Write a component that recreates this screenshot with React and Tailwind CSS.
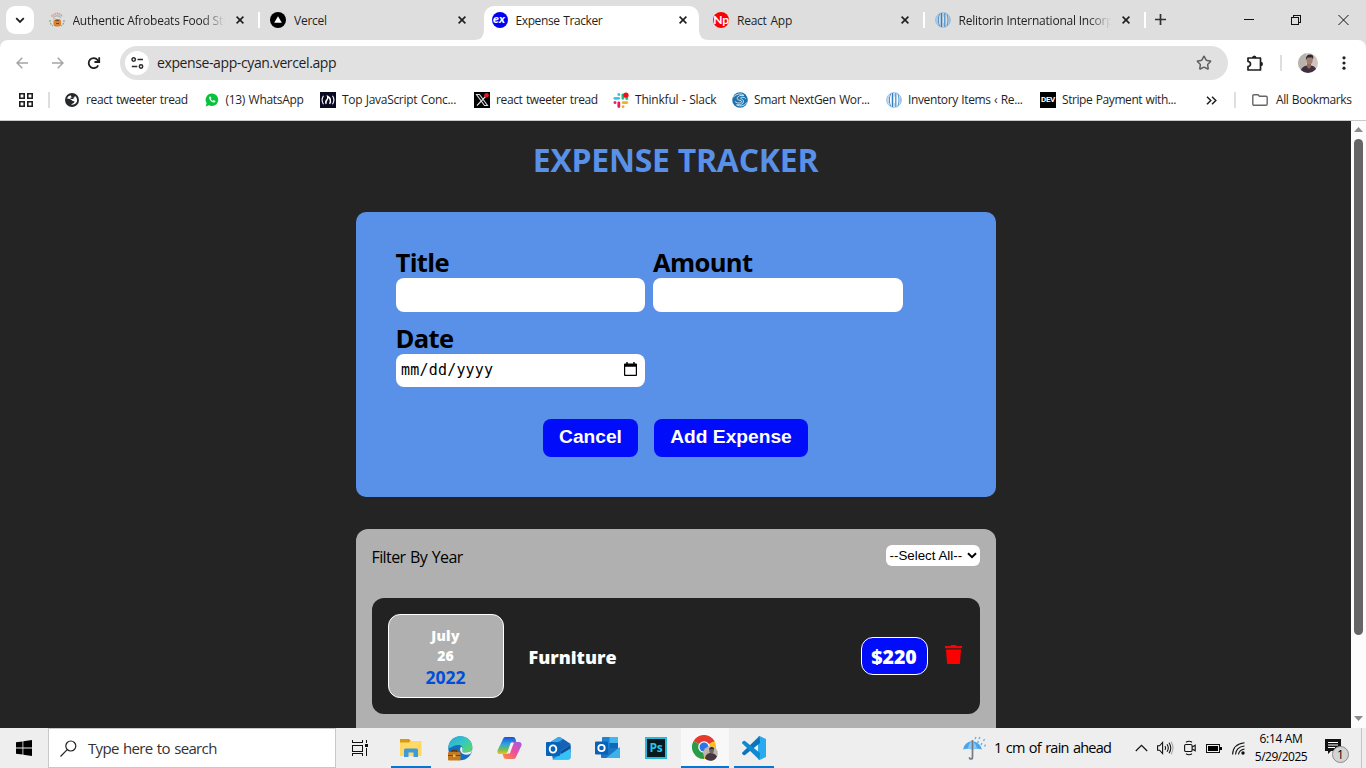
import React from "react";
import { Star } from "lucide-react";

function RelitorinIcon() {
  return (
    <svg width="16" height="16" viewBox="0 0 16 16" fill="none" stroke="#4a90cf" strokeWidth="1">
      <circle cx="8" cy="8" r="7.400" stroke="#8fb9de" strokeWidth="0.9" />
      <path d="M6.500 1v14" strokeWidth="1.500" stroke="#2f7fc6" />
      <path d="M9.800 1v14" strokeWidth="1.300" />
      <path d="M4.500 2C3 5.500 3 10.500 4.500 14M12 2.200c1.300 3.400 1.300 8.200 0 11.600" />
      <path d="M2.300 4.500q-.8 3.500 0 7M14 4.500q.8 3.500 0 7" stroke="#8fb9de" />
      <path d="M8.200 2v2.500M8.200 11v3" stroke="#9cc3e6" />
    </svg>
  );
}

function FoodIcon() {
  return (
    <svg width="16" height="16" viewBox="0 0 16 16" fill="none">
      <path d="M2.500 4.500Q8-1.500 13.500 4.500" stroke="#d99a9a" strokeWidth="1.800" strokeDasharray="1.500 .6" />
      <path d="M4 5.500Q8 2 12 5.500" stroke="#a9bccb" strokeWidth="1.500" />
      <path d="M1 8q-.3 4 3 6M15 8q.3 4-3 6" stroke="#79b07f" strokeWidth="1.200" strokeDasharray="2 1" />
      <rect x="4.500" y="7" width="7.500" height="7.500" rx="2.500" fill="#d98236" />
      <path d="M6 8.500h4M7 11.500h3" stroke="#7b451f" />
      <circle cx="5.500" cy="7" r="1.500" fill="#f0bd7c" />
    </svg>
  );
}

function VercelIcon() {
  return (
    <svg width="16" height="16" viewBox="0 0 16 16">
      <circle cx="8" cy="8" r="8" fill="#000" />
      <path d="M8 4.200 11.800 10.800H4.200Z" fill="#fff" />
    </svg>
  );
}

function CloseIcon() {
  return (
    <svg width="8" height="8" viewBox="0 0 8 8" stroke="#1f1f1f" strokeWidth="1.600" className="shrink-0">
      <path d="m.6.6 6.800 6.800M7.400.6.6 7.400" />
    </svg>
  );
}

function Tab({ icon, title, active, divider, fade, track }) {
  return (
    <div className="relative flex h-[34px] w-[221.500px] shrink-0 items-center">
      <div className={"ml-1 flex h-full w-[215px] items-center rounded-t-[10px] pb-1.5 pl-2 " + (active ? "bg-white" : "")}>
        <span className="flex h-4 w-4 shrink-0">{icon}</span>
        <span className={"mt-px ml-2 h-[18px] w-[152px] overflow-hidden whitespace-nowrap text-[12px] leading-[18px] text-[#1f1f1f] " + track + (fade ? " [mask-image:linear-gradient(to_right,black_85%,transparent)]" : "")}>
          {title}
        </span>
        <span className="ml-[11.500px] flex"><CloseIcon /></span>
      </div>
      {active && (
        <>
          <svg className="absolute -left-1.5 bottom-0" width="10" height="10" viewBox="0 0 10 10"><path d="M10 0v10H0Q10 10 10 0Z" fill="#fff" /></svg>
          <svg className="absolute -right-2 bottom-0" width="10" height="10" viewBox="0 0 10 10"><path d="M0 0v10h10Q0 10 0 0Z" fill="#fff" /></svg>
        </>
      )}
      {divider && <span className="absolute top-[6px] -right-0.5 h-4 w-0.5 bg-white" />}
    </div>
  );
}

function TabStrip() {
  return (
    <div className="flex h-10 items-end bg-[#dedede]">
      <button className="mb-1.5 ml-1.5 flex h-7 w-7 items-center justify-center rounded-[9px] bg-white">
        <svg width="10" height="7" viewBox="0 0 10 7" fill="none" stroke="#1f1f1f" strokeWidth="1.800"><path d="m1.200 1.200 3.800 3.800 3.800-3.800" /></svg>
      </button>
      <div className="ml-[2.500px] flex">
        <Tab icon={<FoodIcon />} title="Authentic Afrobeats Food Sto" fade divider track="tracking-[-0.22px]" />
        <Tab icon={<VercelIcon />} title="Vercel" track="tracking-[-0.25px]" />
        <Tab
          active
          title="Expense Tracker"
          track="tracking-[-0.4px] [word-spacing:1px]"
          icon={<span className="flex h-4 w-4 items-center justify-center rounded-full bg-[#0000f5] pr-px pb-0.5 font-['Lato'] text-[12px] leading-none font-black text-white italic">ex</span>}
        />
        <Tab
          divider
          title="React App"
          track="tracking-[-0.25px] [word-spacing:1px]"
          icon={<span className="flex h-4 w-4 items-center justify-center rounded-full bg-[#fa0000] pb-px font-['Lato'] text-[12px] leading-none font-bold tracking-[-0.3px] text-white">Np</span>}
        />
        <Tab icon={<RelitorinIcon />} title="Relitorin International Incorp" fade divider track="tracking-[-0.22px]" />
      </div>
      <svg className="mb-[15px] ml-[11px]" width="11" height="11" viewBox="0 0 11 11" stroke="#303030" strokeWidth="1.700"><path d="M5.500 0v11M0 5.500h11" /></svg>
      <div className="mr-[17px] mb-[14px] ml-auto flex items-center gap-9">
        <svg width="11" height="12" viewBox="0 0 11 12" stroke="#111" shapeRendering="crispEdges"><path d="M0 5.500h10" /></svg>
        <svg width="11" height="12" viewBox="0 0 11 12" fill="none" stroke="#111" shapeRendering="crispEdges"><path d="M.5 3.500h7v7h-7zM2.500 3V1.500h7v7H8" /></svg>
        <svg width="11" height="12" viewBox="0 0 11 12" stroke="#111"><path d="m.5 1 10 10M10.500 1l-10 10" /></svg>
      </div>
    </div>
  );
}

function Avatar() {
  return (
    <svg width="20" height="20" viewBox="0 0 20 20">
      <clipPath id="av"><circle cx="10" cy="10" r="10" /></clipPath>
      <g clipPath="url(#av)">
        <rect width="20" height="20" fill="#cfc5bd" />
        <rect width="8" height="20" fill="#b9b3ac" />
        <path d="M2 20q1-7 7-7.500h4q6 1 6 7.500Z" fill="#40303f" />
        <path d="M9 10h4v4l-2 2-2-2Z" fill="#8d6a5c" />
        <ellipse cx="11.500" cy="7" rx="3.200" ry="4.200" fill="#a07f70" />
        <path d="M8 7Q7.500 1.500 12 1.500T15 6.500L14 4.500H9.500Z" fill="#2f2832" />
      </g>
    </svg>
  );
}

function Toolbar() {
  return (
    <div className="bg-[#dedede]">
      <div className="flex h-[46px] items-center rounded-t-lg bg-white pl-4">
        <svg width="12" height="12" viewBox="0 0 12 12" fill="none" stroke="#a5a5a5" strokeWidth="1.500"><path d="M12 6H1M6.300.7 1 6l5.300 5.300" /></svg>
        <svg className="ml-6" width="12" height="12" viewBox="0 0 12 12" fill="none" stroke="#a5a5a5" strokeWidth="1.500"><path d="M0 6h11M5.700.7 11 6l-5.300 5.300" /></svg>
        <svg className="-mr-px ml-[23px]" width="14" height="13" viewBox="0 0 14 13" fill="none"><path d="M11.200 8.300A5 5 0 1 1 10.600 3L11.700 4.300" stroke="#1f1f1f" strokeWidth="1.800" /><path d="M12.200 .3V5H7.500" stroke="#1f1f1f" strokeWidth="1.800" /></svg>
        <div className="ml-5 flex h-[34px] w-[1108px] items-center rounded-full bg-[#e1e1e1] pl-[5px]">
          <span className="flex h-6 w-6 items-center justify-center rounded-full bg-white">
            <svg width="13" height="12" viewBox="0 0 13 12" fill="none" stroke="#2b2b2b" strokeWidth="1.500"><circle cx="2.700" cy="2.500" r="1.700" /><path d="M6.500 2.500H12M.8 9.500h5.500" /><circle cx="10" cy="9.500" r="1.700" /></svg>
          </span>
          <span className="mb-px ml-2 text-[14px] tracking-[-0.39px] text-[#1f1f1f]">expense-app-cyan.vercel.app</span>
          <Star className="mr-4 ml-auto h-4 w-4 text-[#5f5f5f]" strokeWidth={2.2} strokeLinejoin="miter" />
        </div>
        <svg className="ml-[18px]" width="18" height="18" viewBox="0 0 18 18" fill="none"><path d="M2 4h12.500v12H2v-3.500q2.500-.3 2.500-2.500T2 7.500Z" stroke="#1f1f1f" strokeWidth="1.700" strokeLinejoin="round" /><path d="M6 4q0-2.500 2.300-2.500T10.500 4ZM14.500 7.800q2.500 0 2.500 2.200t-2.500 2.200Z" fill="#1f1f1f" /></svg>
        <span className="ml-4 h-4 w-0.5 bg-[#dedede]" />
        <span className="ml-4"><Avatar /></span>
        <svg className="ml-6" width="4" height="14" viewBox="0 0 4 14" fill="#1f1f1f"><circle cx="2" cy="1.800" r="1.600" /><circle cx="2" cy="7" r="1.600" /><circle cx="2" cy="12.200" r="1.600" /></svg>
      </div>
    </div>
  );
}

function Bookmark({ icon, label, width, track = "tracking-[-0.37px]" }) {
  return (
    <div className={"flex shrink-0 items-center [word-spacing:0.7px] " + width}>
      <span className="flex h-4 w-4 shrink-0 items-center justify-center">{icon}</span>
      <span className={"ml-1.5 whitespace-nowrap " + track}>{label}</span>
    </div>
  );
}

function SlackIcon() {
  return (
    <svg width="17" height="17" viewBox="0 0 17 17" strokeWidth="3" strokeLinecap="round">
      <path d="M2 6.200h4" stroke="#36c5f0" /><path d="M6.200 2v.3" stroke="#36c5f0" />
      <path d="M10.500 2.500v3.700M14.500 6.500h.3" stroke="#2eb67d" />
      <path d="M6.200 11v4M2 10.700h.3" stroke="#e01e5a" />
      <path d="M10.700 10.700h4M10.700 15v.2" stroke="#ecb22e" />
      <circle cx="13.800" cy="2.800" r="2.800" fill="#f00f1e" />
    </svg>
  );
}

function BookmarksBar() {
  return (
    <div className="flex h-[35px] items-start border-b border-[#c9c9c9] bg-white pt-[6px] text-[12px] leading-4 text-[#1f1f1f]">
      <svg className="ml-[19px]" width="14" height="16" viewBox="0 0 14 16" fill="none" stroke="#1f1f1f" strokeWidth="1.600"><path d="M.8 1.800h4.400v4.400H.8zM8.800 1.800h4.400v4.400H8.800zM.8 9.800h4.400v4.400H.8zM8.800 9.800h4.400v4.400H8.800z" /></svg>
      <span className="ml-[15px] h-4 w-0.5 bg-[#dedede]" />
      <div className="ml-[14px] flex">
        <Bookmark width="w-[139.500px]" label="react tweeter tread" icon={<svg width="14" height="14" viewBox="0 0 14 14"><circle cx="7" cy="7" r="7" fill="#27282c" /><path d="M5.500 2.200Q2.500 3 2 5.500q3.500.2 4.500 1.500t3 1.200l-.5 1.500-3 1.800q4 .8 5.800-2.500Q12.800 5 10 3L9 4.700H7Z" fill="#fff" /><path d="M5.500 4.500h3v1.500h-3z" fill="#27282c" /></svg>} />
        <Bookmark width="w-[116.500px]" label="(13) WhatsApp" track="tracking-[-0.3px]" icon={<svg width="16" height="16" viewBox="0 0 16 16"><path d="M8 1.500a6.200 6.200 0 0 1 0 12.500q-1.600 0-3-.8L1.700 14.500 2.600 11A6.200 6.200 0 0 1 8 1.500Z" fill="#08c23c" /><path d="M5.700 4.600q-1.500 1.300.5 3.700 2.500 3 4.500 2 .9-.6.7-1.400L9.700 8l-.9.9Q7.300 8 6.700 6.700l.7-.7-.8-1.500Z" fill="#fff" /></svg>} />
        <Bookmark width="w-[154px]" label="Top JavaScript Conc..." track="tracking-[-0.3px]" icon={<span className="flex h-4 w-4 items-center justify-center bg-[#0a0a23]"><svg width="14" height="10" viewBox="0 0 14 10" fill="none" stroke="#fff" strokeWidth="1.100"><path d="M2.500 .8Q-.3 5 2.500 9.200M11.500 .8q2.800 4.200 0 8.400" /><path d="M5.300 8.800Q4 7 6 4.800 7.200 3.500 6.700 1.500 9.500 3 9.300 5.500 10 7 8.500 8.800" strokeWidth="1.500" /></svg></span>} />
        <Bookmark width="w-[139px]" label="react tweeter tread" icon={<svg width="16" height="16" viewBox="0 0 16 16"><path d="M0 0h16v16H0z" /><path d="M2.500 2.500h3l8 11h-3ZM13 3 3 13.500" fill="none" stroke="#ddd" strokeWidth="1.100" /><circle cx="12.500" cy="3.200" r="2.300" fill="#f5101f" /></svg>} />
        <Bookmark width="w-[119px]" label="Thinkful - Slack" track="tracking-[-0.22px]" icon={<SlackIcon />} />
        <Bookmark width="w-[154px]" label="Smart NextGen Wor..." icon={<svg width="16" height="16" viewBox="0 0 16 16" fill="none"><circle cx="8" cy="8" r="7.800" fill="#1d72ae" /><path d="M1 5.200Q7-.5 12 3.500 7 2.500 5.500 5.200T9 8.500q2 1.500-1 2.500-3 .5-5-1.500M15 10.500q-5 5.500-10.500 2.300 5 .7 6.600-1.800 2-2.800-1.800-4.200-2-1 .5-1.600 3-.3 4 1.700" stroke="#d8e9f5" strokeWidth=".9" /></svg>} />
        <Bookmark width="w-[154px]" label="Inventory Items ‹ Re..." icon={<RelitorinIcon />} />
        <Bookmark width="w-[137px]" label="Stripe Payment with..." track="tracking-[-0.42px]" icon={<span className="flex h-4 w-4 items-center justify-center bg-black font-['Roboto'] text-[8px] leading-none font-bold tracking-[-0.3px] text-white">DEV</span>} />
      </div>
      <svg className="mt-[4px] ml-[29px]" width="11" height="9" viewBox="0 0 11 9" fill="none" stroke="#1f1f1f" strokeWidth="1.500"><path d="m1 .7 3.800 3.800L1 8.300M6 .7l3.800 3.800L6 8.300" /></svg>
      <span className="ml-[17px] h-4 w-0.5 bg-[#dedede]" />
      <svg className="mt-[2px] ml-[16px]" width="16" height="12" viewBox="0 0 16 12" fill="none" stroke="#666" strokeWidth="1.400"><path d="M.8 2q0-1.200 1.200-1.200h4L7.500 2.300H14q1.200 0 1.200 1.200V10q0 1.200-1.200 1.200H2Q.8 11.200.8 10Z" /></svg>
      <span className="ml-2 tracking-[-0.4px] whitespace-nowrap [word-spacing:0.7px]">All Bookmarks</span>
    </div>
  );
}

function Field({ label, children, height = "h-[34px]" }) {
  return (
    <div className="flex w-[249.500px] flex-col">
      <span className="h-[32px] text-[25.600px] leading-[34px] font-bold tracking-[-0.65px] text-black">{label}</span>
      <div className={"flex items-center rounded-lg bg-white px-[5.500px] " + height}>{children}</div>
    </div>
  );
}

function ExpenseForm() {
  return (
    <section className="h-[285px] w-[640px] shrink-0 rounded-[10px] bg-[#5990e8] px-10 pt-[34px]">
      <div className="flex flex-wrap gap-x-2 gap-y-[10px]">
        <Field label="Title" />
        <Field label="Amount" />
        <Field label="Date" height="h-[33px]">
          <span className="font-['DejaVu_Sans_Mono',monospace] text-[15px] tracking-[0.2px] text-black">mm/dd/yyyy</span>
          <svg className="mr-[3px] mb-[3px] ml-auto" width="13" height="14" viewBox="0 0 14 15"><path d="M2.500 0H4v1.500h6V0h1.500v1.500H13q1 0 1 1V14q0 1-1 1H1q-1 0-1-1V2.500q0-1 1-1h1.500ZM1.300 5v8.600h11.400V5Z" /></svg>
        </Field>
      </div>
      <div className="mt-8 flex justify-center gap-4 font-['Liberation_Sans',Arial,sans-serif] text-[19.200px] font-bold text-white">
        <button className="h-[38px] w-[95px] rounded-lg bg-[#000cfa] pb-px">Cancel</button>
        <button className="h-[38px] w-[154px] rounded-lg bg-[#000cfa] pb-px">Add Expense</button>
      </div>
    </section>
  );
}

function ExpenseList() {
  return (
    <section className="mt-8 h-[240px] w-[640px] shrink-0 rounded-t-[12px] bg-[#b0b0b0] px-4 pt-4">
      <div className="flex items-start justify-between">
        <span className="text-[16px] leading-6 tracking-[-0.6px] text-black [word-spacing:1px]">Filter By Year</span>
        <div className="flex h-[21px] w-[94px] items-center rounded-md bg-white pl-1 font-['Liberation_Sans',Arial,sans-serif] text-[13.333px] leading-none text-black">
          <span className="whitespace-nowrap">--Select All--</span>
          <svg className="mr-[3px] ml-auto" width="10" height="7" viewBox="0 0 10 7" fill="none" stroke="#000" strokeWidth="2"><path d="m1 1.200 4 4 4-4" /></svg>
        </div>
      </div>
      <article className="mt-[29px] flex h-[116px] items-center rounded-[12px] bg-[#222] px-4">
        <div className="flex h-[84px] w-[116px] flex-col items-center rounded-[12px] border border-white bg-[#b0b0b0] pt-[11px] text-[14px] leading-5 font-extrabold text-white">
          <span className="tracking-[0.3px]">July</span>
          <span>26</span>
          <span className="text-[17.600px] leading-[22px] font-bold tracking-[-0.1px] text-[#004ed6]">2022</span>
        </div>
        <h2 className="ml-[25px] pt-0.5 text-[18px] font-extrabold text-white">Furniture</h2>
        <span className="-mt-px ml-auto flex h-[38px] w-[67px] items-center justify-center rounded-[12px] border border-white bg-[#000cfa] pt-0.5 text-[19.500px] font-extrabold text-white">$220</span>
        <svg className="mr-0.5 mb-[3px] ml-[17px]" width="17" height="19" viewBox="0 0 17 19" fill="#f00"><path d="M6 0h5l.6 1H17v2.200H0V1h5.400ZM1 4.600h15L15 18q0 1-1 1H3q-1 0-1-1Z" /></svg>
      </article>
    </section>
  );
}

function Page() {
  return (
    <div className="flex h-[607px] overflow-hidden">
      <main className="flex w-[1351px] flex-col items-center bg-[#242424]">
        <h1 className="mt-[17px] mb-[30px] text-[32px] leading-[44px] font-bold tracking-[-0.27px] whitespace-nowrap text-[#5990e8]">EXPENSE TRACKER</h1>
        <ExpenseForm />
        <ExpenseList />
      </main>
      <div className="flex w-[15px] flex-col items-center bg-[#fcfcfc] pt-[6px] pb-[7px]">
        <svg width="9" height="5" viewBox="0 0 9 5" fill="#8b8b8b"><path d="M4.500 0 9 5H0Z" /></svg>
        <span className="mt-[7px] h-[496px] w-[9px] rounded-full bg-[#656565]" />
        <svg className="mt-auto" width="9" height="5" viewBox="0 0 9 5" fill="#8b8b8b"><path d="M4.500 5 0 0h9Z" /></svg>
      </div>
    </div>
  );
}

function AppSlot({ children, bar, active }) {
  return (
    <div className="flex h-10 w-[49px] shrink-0 justify-center">
      <div className={"flex h-10 flex-col items-center " + (active ? "w-12 bg-[#f8f8f8]" : "w-10")}>
        <span className="flex h-[38px] items-center pt-0.5 pl-px">{children}</span>
        {bar && <span className="h-0.5 w-full bg-[#0078d7]" />}
      </div>
    </div>
  );
}

function ExplorerIcon() {
  return (
    <svg width="22" height="20" viewBox="0 0 22 20"><path d="M0 1.500Q0 1 .5 1H9l2 2h10q.5 0 .5.5V18H0Z" fill="#ffd866" /><path d="M0 1.500Q0 1 .5 1H9l1.500 1.800L9 4.500H0Z" fill="#d99a10" /><path d="M4 19v-7q0-1.500 1.500-1.500h11Q18 10.500 18 12v7h-4.500v-4.500h-5V19Z" fill="#3f9bd8" /></svg>
  );
}

function EdgeIcon() {
  return (
    <svg width="25" height="25" viewBox="0 0 25 25">
      <defs>
        <linearGradient id="eg" x1="0" y1="0" x2="1" y2="1"><stop offset="0" stopColor="#28a8e5" /><stop offset=".5" stopColor="#36c8c0" /><stop offset="1" stopColor="#65d94d" /></linearGradient>
      </defs>
      <circle cx="12.300" cy="12.300" r="12" fill="#156fc0" />
      <path d="M.3 12.500C.3 5 6 .3 12.500.3c7 0 12 5 11.800 10.500-.1 4.200-3.500 5.700-6.800 5.700-3.200 0-4.500-1.300-3-2.800 1.200-3-1.700-5.200-5-4.700-4.500.4-8 3.500-9.200 3.500Z" fill="url(#eg)" />
      <path d="M13 10.500q-2.500 4.500 2 7.500 4 2 8-.8L24.500 13q-2 3.500-7 3.500-4.500 0-3-2.800.8-1.700-1.500-3.200Z" fill="#eee" />
      <rect x="0" y="16" width="12.500" height="8.500" rx="1" fill="#c47a20" /><path d="M4 16v-1.500h4.500V16" stroke="#613b10" strokeWidth="1.300" fill="none" /><path d="M0 19.500h12.500" stroke="#704614" /><path d="M5 18.500h2.500V21H5z" fill="#f0ba55" />
    </svg>
  );
}

function CopilotIcon() {
  return (
    <svg width="25" height="22" viewBox="0 0 25 22">
      <defs>
        <linearGradient id="c1" x1="0" y1="0" x2="0" y2="1"><stop offset="0" stopColor="#1b4fd1" /><stop offset=".4" stopColor="#2aa1e8" /><stop offset=".75" stopColor="#78bd51" /><stop offset="1" stopColor="#f1c21b" /></linearGradient>
        <linearGradient id="c2" x1="1" y1="0" x2="0" y2="1"><stop offset="0" stopColor="#9d5cf0" /><stop offset=".5" stopColor="#ee5098" /><stop offset="1" stopColor="#f99436" /></linearGradient>
      </defs>
      <path d="M6.500 1Q7 0 8.500 0H16q2 0 2.500 2l.8 3H16q-2 0-2.700 2l-2.800 8q-.8 2-2.500 2H3Q0 17 .5 13.500Z" fill="url(#c1)" />
      <path d="M18.500 21Q18 22 16.500 22H9q-2 0-2.500-2l-.8-3H9q2 0 2.700-2l2.800-8q.8-2 2.500-2h5q3 0 2.500 3.500Z" fill="url(#c2)" />
      <path d="M13.800 6h3l-4 10.500H9.500q1.500-.3 2-1.500Z" fill="#f7f3f5" />
    </svg>
  );
}

function OutlookNewIcon() {
  return (
    <svg width="25" height="23" viewBox="0 0 25 23"><path d="m3 6 8.500-5.500q1.500-1 3 0L24.500 7v13q0 2.500-2.500 2.500H7Z" fill="#1a7ad2" /><path d="m3 6 8.500-5.500q1.500-1 3 0L17 2 7 8Z" fill="#3fa9e8" /><path d="m17 2 7.500 5L14 14V6Z" fill="#1862b5" /><path d="m14 15 10.500-7v7L18 18Z" fill="#134c92" /><path d="m6 22.500 18.500-11V20q0 2.500-2.500 2.500Z" fill="#35c3f5" /><rect y="5" width="14" height="14" rx="1" fill="#0862b8" /><ellipse cx="7" cy="12" rx="3.300" ry="3.600" fill="none" stroke="#fff" strokeWidth="1.900" /></svg>
  );
}

function OutlookIcon() {
  return (
    <svg width="25" height="22" viewBox="0 0 25 22"><path d="M7 1q0-1 1-1h14q1 0 1 1v12H7Z" fill="#1c83d4" /><path d="M14.500 0H23v6h-8.500z" fill="#42b6ee" /><path d="M14.500 6H23v6h-8.500z" fill="#1068b8" /><path d="M6 11h19v10H7q-1 0-1-1Z" fill="#1976c6" /><path d="M25 10 11 21h13q1 0 1-1Z" fill="#3eb1eb" /><rect y="4.500" width="13" height="13" rx="1" fill="#0862b8" /><circle cx="6.500" cy="11" r="3.200" fill="none" stroke="#fff" strokeWidth="1.800" /></svg>
  );
}

function ChromeIcon() {
  return (
    <svg width="26" height="26" viewBox="0 0 26 26">
      <path d="M12 12 1.600 6A12 12 0 0 1 22.400 6Z" fill="#e33b2e" />
      <path d="M12 12 22.400 6A12 12 0 0 1 12 24Z" fill="#fbc116" />
      <path d="M12 12V24A12 12 0 0 1 1.600 6Z" fill="#2c9b47" />
      <path d="M12 6.500h10.600L22 5.500H12Z" fill="#e33b2e" />
      <circle cx="12" cy="12" r="5.800" fill="#fff" /><circle cx="12" cy="12" r="4.500" fill="#2d74e8" />
      <circle cx="18.500" cy="18.500" r="7.300" fill="#bdb5ae" />
      <path d="M13 23.500q.5-5 5-5.500t7 3.500q-2.500 4.500-6.500 4.300T13 23.500Z" fill="#45363f" /><ellipse cx="19.500" cy="15.500" rx="2.300" ry="3" fill="#75645e" /><path d="M17 14.500q.5-3 3-2.500t2 3l-1-1Z" fill="#302a30" />
    </svg>
  );
}

function VsCodeIcon() {
  return (
    <svg width="24" height="24" viewBox="0 0 24 24"><path d="M17.500 0 24 3v18l-6.500 3-1.500-1V1Z" fill="#29a9ee" /><path d="M17.500 0 18 7 3 19q-.8.4-1.500 0L.3 18q-.6-.7 0-1.500L17.500 0Z" fill="#0875bd" /><path d="M17.500 24 18 17 3 5q-.8-.4-1.500 0L.3 6q-.6.7 0 1.500L17.500 24Z" fill="#1189d1" /></svg>
  );
}

function Taskbar() {
  return (
    <div className="flex h-10 items-center bg-[#eee] text-black">
      <svg className="ml-4" width="16" height="16" viewBox="0 0 16 16"><path d="m0 2.300 6.500-.9v6.100H0ZM7.300 1.200 16 0v7.500H7.300ZM0 8.400h6.500v6.200L0 13.700ZM7.300 8.400H16V16l-8.700-1.200Z" /></svg>
      <div className="ml-4 flex h-10 w-[288px] items-center border border-[#c8c8c8] bg-white pl-[11px]">
        <svg width="17" height="17" viewBox="0 0 17 17" fill="none" stroke="#222" strokeWidth="1.200"><circle cx="10.800" cy="6" r="5" /><path d="M7.200 9.700.5 16.500" /></svg>
        <span className="ml-[11px] text-[15px] tracking-[-0.65px] whitespace-nowrap text-[#333] [word-spacing:1px]">Type here to search</span>
      </div>
      <svg className="ml-4" width="17" height="16" viewBox="0 0 17 16" fill="none" stroke="#111" shapeRendering="crispEdges"><path d="M.5 0v2.500h10V0M.5 5.500h10v6H.5zM.5 16v-2.500h10V16M14.500 0v3M14.500 8v8" /><path d="M13 4h3v3h-3z" fill="#111" stroke="none" /></svg>
      <div className="ml-[17px] flex">
        <AppSlot bar><ExplorerIcon /></AppSlot>
        <AppSlot><EdgeIcon /></AppSlot>
        <AppSlot><CopilotIcon /></AppSlot>
        <AppSlot><OutlookNewIcon /></AppSlot>
        <AppSlot><OutlookIcon /></AppSlot>
        <AppSlot><span className="flex h-[22px] w-[22px] items-center justify-center border-2 border-[#28b9d8] bg-[#07191f] text-[12px] leading-none font-bold tracking-[-0.3px] text-[#28c5e8]">Ps</span></AppSlot>
        <AppSlot bar active><ChromeIcon /></AppSlot>
        <AppSlot bar><VsCodeIcon /></AppSlot>
      </div>
      <div className="ml-auto flex h-10 items-center">
        <svg width="23" height="24" viewBox="0 0 23 24" fill="none"><path d="M0 13.500Q1.500 6 9 5q8 1 10 8.500-5-1.500-9.500 0-5-1.300-9.500 0Z" fill="#4ba3ea" /><path d="M5 13Q6 6 9 5q4 2 5 8-3-.5-4.500.5Q7.500 12.500 5 13Z" fill="#8ac8f8" /><path d="M9.500 4v17q0 2-1.500 2t-1.500-1.800" stroke="#757b82" strokeWidth="1.700" /><path d="m13 1-1 2M17 1l-1 2M21.500 3l-1 2M15.500 5l-1 2M19 7l-1 2M22.500 8.500l-1 2" stroke="#58b1f0" strokeWidth="1.300" /></svg>
        <span className="ml-2 w-[116px] text-[14.500px] tracking-[-0.75px] whitespace-nowrap [word-spacing:1.200px]">1 cm of rain ahead</span>
        <svg className="ml-[25px]" width="13" height="8" viewBox="0 0 13 8" fill="none" stroke="#111" strokeWidth="1.200"><path d="m.8 7 5.700-5.700L12.200 7" /></svg>
        <svg className="ml-[9px]" width="17" height="14" viewBox="0 0 17 14" fill="none" stroke="#111" strokeWidth="1.100"><path d="M.6 4.800h2l3-3.300v11l-3-3.300h-2ZM8 5q1.300 2 0 4M10 3.200q2.600 3.800 0 7.600M12 1.800q3.600 5.200 0 10.400" /><path d="M14 .6q4 6.400 0 12.800" stroke="#aaa" /></svg>
        <svg className="ml-[10px]" width="12" height="16" viewBox="0 0 12 16" fill="none" stroke="#111" strokeWidth="1.100"><path d="M2 2.200Q5 .2 8 2.200M2 13.800q3 2 6 0" /><rect x=".6" y="4.500" width="7.500" height="7" rx="1.300" /><path d="m8.200 7 3-1.800v5.600L8.200 9" /></svg>
        <svg className="ml-[10px]" width="16" height="9" viewBox="0 0 16 9" shapeRendering="crispEdges"><path d="M.5.5h13v8H.5z" fill="none" stroke="#111" /><path d="M2 2h10v5H2zM14 3h1.500v3H14z" /></svg>
        <svg className="ml-[10px]" width="13" height="13" viewBox="0 0 13 13" fill="none" stroke="#111" strokeWidth="1.100"><path d="M.6 12.500Q1 2 12.500.8M3.500 12.500Q4 5 12.500 4M6.500 12.500Q7 8 12.500 7" /><circle cx="11" cy="11" r="1.700" fill="#111" stroke="none" /></svg>
        <div className="ml-[7px] flex w-[58px] flex-col items-center text-[12px] leading-[18px] whitespace-nowrap">
          <span className="tracking-[-0.35px]">6:14 AM</span>
          <span className="tracking-[-0.5px]">5/29/2025</span>
        </div>
        <div className="relative ml-[15px] h-[18px] w-[25px]">
          <svg width="16" height="16" viewBox="0 0 16 16"><path d="M0 0h16v12H6l-3 3v-3H0Z" fill="#111" /><path d="M3 3.500h10M3 6h10M3 8.500h7" stroke="#fff" /></svg>
          <span className="absolute top-[7px] left-[7px] flex h-[17px] w-[17px] items-center justify-center rounded-full border border-[#8b8b8b] bg-[#d4d4d4] text-[12px] leading-none">1</span>
        </div>
        <span className="mr-1 ml-[11px] h-10 w-px bg-[#c4c4c4]" />
      </div>
    </div>
  );
}

export default function App() {
  return (
    <div className="h-[768px] w-[1366px] overflow-hidden bg-white font-['Open_Sans','Noto_Sans',sans-serif]">
      <TabStrip />
      <Toolbar />
      <BookmarksBar />
      <Page />
      <Taskbar />
    </div>
  );
}
